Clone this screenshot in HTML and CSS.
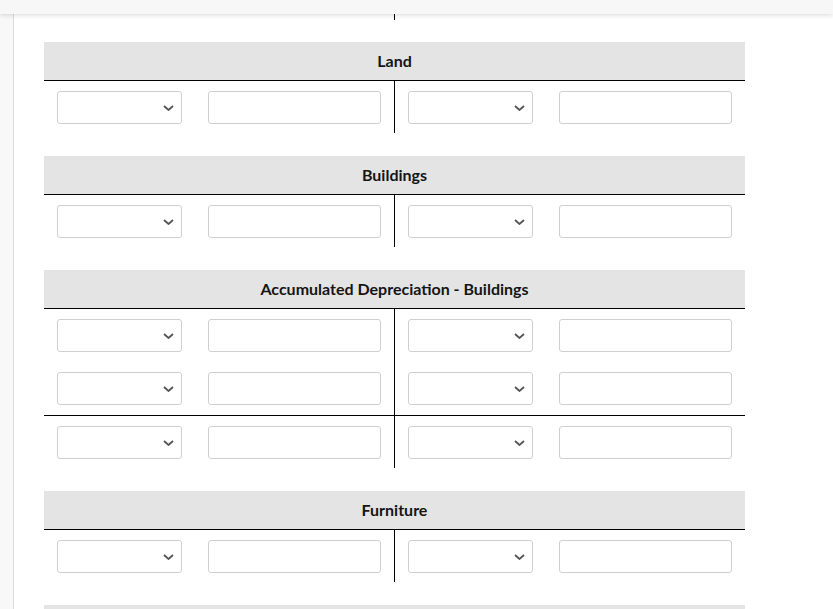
FILE: index.html
```html
<!DOCTYPE html>
<html lang="en">
<head>
<meta charset="utf-8">
<title>T-Accounts</title>
<link rel="stylesheet" href="styles.css">
</head>
<body>
<div class="topbar"></div>
<div class="page">
  <aside class="sidebar"></aside>
  <main class="content">
    <div class="tail"></div>

    <section class="account">
      <div class="acc-head">Land</div>
      <div class="sec">
        <div class="side">
          <div class="row"><div class="sel"><select></select><svg class="chev" width="11" height="6" viewBox="0 0 11 6"><path d="M1 1 L5.5 5 L10 1" fill="none" stroke="#555" stroke-width="1.8"/></svg></div><input class="amt" type="text"></div>
        </div>
        <div class="side">
          <div class="row"><div class="sel"><select></select><svg class="chev" width="11" height="6" viewBox="0 0 11 6"><path d="M1 1 L5.5 5 L10 1" fill="none" stroke="#555" stroke-width="1.8"/></svg></div><input class="amt" type="text"></div>
        </div>
      </div>
    </section>

    <section class="account">
      <div class="acc-head">Buildings</div>
      <div class="sec">
        <div class="side">
          <div class="row"><div class="sel"><select></select><svg class="chev" width="11" height="6" viewBox="0 0 11 6"><path d="M1 1 L5.5 5 L10 1" fill="none" stroke="#555" stroke-width="1.8"/></svg></div><input class="amt" type="text"></div>
        </div>
        <div class="side">
          <div class="row"><div class="sel"><select></select><svg class="chev" width="11" height="6" viewBox="0 0 11 6"><path d="M1 1 L5.5 5 L10 1" fill="none" stroke="#555" stroke-width="1.8"/></svg></div><input class="amt" type="text"></div>
        </div>
      </div>
    </section>

    <section class="account">
      <div class="acc-head">Accumulated Depreciation - Buildings</div>
      <div class="sec">
        <div class="side">
          <div class="row"><div class="sel"><select></select><svg class="chev" width="11" height="6" viewBox="0 0 11 6"><path d="M1 1 L5.5 5 L10 1" fill="none" stroke="#555" stroke-width="1.8"/></svg></div><input class="amt" type="text"></div>
          <div class="row"><div class="sel"><select></select><svg class="chev" width="11" height="6" viewBox="0 0 11 6"><path d="M1 1 L5.5 5 L10 1" fill="none" stroke="#555" stroke-width="1.8"/></svg></div><input class="amt" type="text"></div>
        </div>
        <div class="side">
          <div class="row"><div class="sel"><select></select><svg class="chev" width="11" height="6" viewBox="0 0 11 6"><path d="M1 1 L5.5 5 L10 1" fill="none" stroke="#555" stroke-width="1.8"/></svg></div><input class="amt" type="text"></div>
          <div class="row"><div class="sel"><select></select><svg class="chev" width="11" height="6" viewBox="0 0 11 6"><path d="M1 1 L5.5 5 L10 1" fill="none" stroke="#555" stroke-width="1.8"/></svg></div><input class="amt" type="text"></div>
        </div>
      </div>
      <div class="sec total">
        <div class="side">
          <div class="row"><div class="sel"><select></select><svg class="chev" width="11" height="6" viewBox="0 0 11 6"><path d="M1 1 L5.5 5 L10 1" fill="none" stroke="#555" stroke-width="1.8"/></svg></div><input class="amt" type="text"></div>
        </div>
        <div class="side">
          <div class="row"><div class="sel"><select></select><svg class="chev" width="11" height="6" viewBox="0 0 11 6"><path d="M1 1 L5.5 5 L10 1" fill="none" stroke="#555" stroke-width="1.8"/></svg></div><input class="amt" type="text"></div>
        </div>
      </div>
    </section>

    <section class="account">
      <div class="acc-head">Furniture</div>
      <div class="sec">
        <div class="side">
          <div class="row"><div class="sel"><select></select><svg class="chev" width="11" height="6" viewBox="0 0 11 6"><path d="M1 1 L5.5 5 L10 1" fill="none" stroke="#555" stroke-width="1.8"/></svg></div><input class="amt" type="text"></div>
        </div>
        <div class="side">
          <div class="row"><div class="sel"><select></select><svg class="chev" width="11" height="6" viewBox="0 0 11 6"><path d="M1 1 L5.5 5 L10 1" fill="none" stroke="#555" stroke-width="1.8"/></svg></div><input class="amt" type="text"></div>
        </div>
      </div>
    </section>

    <section class="account">
      <div class="acc-head"></div>
    </section>
  </main>
</div>
</body>
</html>
```

FILE: styles.css
```css
* { box-sizing: border-box; }

html, body {
  margin: 0;
  padding: 0;
  background: #fff;
  font-family: Lato, "Open Sans", "Liberation Sans", sans-serif;
  color: #1a1a1a;
  overflow: hidden;
  height: 609px;
}

.topbar {
  position: relative;
  z-index: 2;
  height: 14px;
  background: #f7f7f7;
  box-shadow: 0 1px 5px rgba(0, 0, 0, 0.16);
}

.page {
  display: flex;
  align-items: stretch;
  height: 595px;
}

.sidebar {
  flex: 0 0 14px;
  background: #f8f8f8;
  border-right: 1px solid #dcdcdc;
}

.content {
  flex: 1;
  padding-left: 30px;
}

.tail {
  width: 351px;
  height: 6px;
  border-right: 1px solid #000;
  margin-bottom: 22px;
}

.account {
  width: 701px;
  margin-bottom: 23px;
}

.acc-head {
  height: 39px;
  line-height: 38px;
  background: #e4e4e4;
  border-bottom: 1px solid #000;
  text-align: center;
  font-weight: 700;
  font-size: 16px;
  color: #151515;
}

.sec {
  display: grid;
  grid-template-columns: 351px 350px;
}

.sec.total {
  border-top: 1px solid #000;
}

.side {
  display: flex;
  flex-direction: column;
  gap: 20px;
  padding: 10px 13px 9px 13px;
}

.side:first-child {
  border-right: 1px solid #000;
}

.sec:not(:last-child) .side {
  padding-bottom: 10px;
}

.row {
  display: flex;
  gap: 26px;
  height: 33px;
}

.sel {
  position: relative;
  width: 125px;
  height: 33px;
}

.sel select {
  appearance: none;
  -webkit-appearance: none;
  width: 125px;
  height: 33px;
  margin: 0;
  border: 1px solid #cfcfcf;
  border-radius: 3px;
  background: #fff;
  font-family: inherit;
}

.chev {
  position: absolute;
  right: 8px;
  top: 14px;
  pointer-events: none;
}

.amt {
  width: 173px;
  height: 33px;
  margin: 0;
  border: 1px solid #cfcfcf;
  border-radius: 3px;
  background: #fff;
  font-family: inherit;
}
```
